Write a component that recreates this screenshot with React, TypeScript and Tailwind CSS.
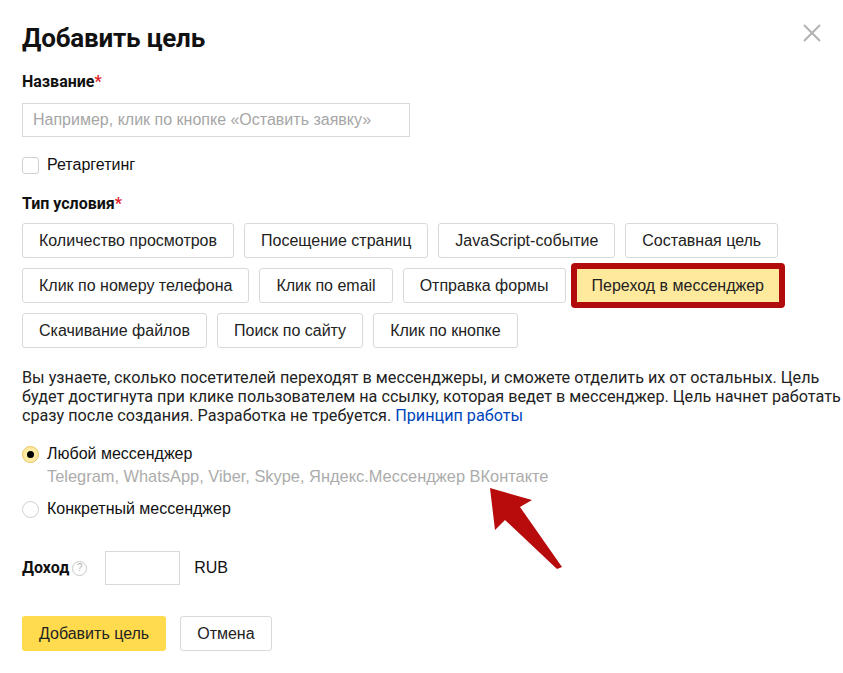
import { useState } from 'react'

const row1 = ['Количество просмотров', 'Посещение страниц', 'JavaScript-событие', 'Составная цель']
const row2 = ['Клик по номеру телефона', 'Клик по email', 'Отправка формы']
const row3 = ['Скачивание файлов', 'Поиск по сайту', 'Клик по кнопке']

const arial = { fontFamily: '"Liberation Sans", Arial, sans-serif' }

const TypeButton = ({ label }: { label: string }) => (
  <button className="h-[35px] rounded-[3px] border border-[#d9d9d9] bg-white px-4 text-[16px] text-[#222]">
    {label}
  </button>
)

const Radio = ({ checked }: { checked: boolean }) => (
  <span
    className={
      checked
        ? 'flex h-[17px] w-[17px] items-center justify-center rounded-full border border-[#e8c55a] bg-[#ffeaa3]'
        : 'h-[17px] w-[17px] rounded-full border border-[#d0d0d0]'
    }
  >
    {checked && <span className="h-[7px] w-[7px] rounded-full bg-black" />}
  </span>
)

export default function App() {
  const [any, setAny] = useState(true)

  return (
    <div
      className="relative min-h-[673px] w-[843px] bg-white px-[22px] pt-[22px] text-[#111]"
      style={{ fontFamily: 'Roboto, "Noto Sans", sans-serif' }}
    >
      {/* close */}
      <button className="absolute right-[22px] top-[24px] text-[#b3b3b3]">
        <svg width="18" height="18" viewBox="0 0 18 18" fill="none" stroke="currentColor" strokeWidth="2">
          <path d="M1 1l16 16M17 1L1 17" />
        </svg>
      </button>

      <h1 className="text-[26px] font-bold leading-[32px] tracking-[-0.2px]">Добавить цель</h1>

      <div className="mt-[18px] text-[16px] font-bold leading-[20px]">
        Название<span className="text-[#e0222b]">*</span>
      </div>

      <input
        className="mt-[11px] block h-[34px] w-[388px] border border-[#d9d9d9] px-[10px] text-[16px] placeholder:text-[#a6a6a6] focus:outline-none"
        style={arial}
        placeholder="Например, клик по кнопке «Оставить заявку»"
      />

      <label className="mt-[16px] flex items-center gap-2 text-[16px]" style={arial}>
        <span className="h-[17px] w-[17px] rounded-[3px] border border-[#cfcfcf] bg-white" />
        <span>Ретаргетинг</span>
      </label>

      <div className="mt-[17px] text-[16px] font-bold leading-[20px]">
        Тип условия<span className="text-[#e0222b]">*</span>
      </div>

      <div className="mt-[9px] flex flex-col gap-[10px]" style={arial}>
        <div className="flex gap-[10px]">
          {row1.map(l => (
            <TypeButton key={l} label={l} />
          ))}
        </div>
        <div className="flex items-center gap-[5px]">
          <div className="flex gap-[10px]">
            {row2.map(l => (
              <TypeButton key={l} label={l} />
            ))}
          </div>
          <div className="-my-[6px] rounded-[4px] bg-[#b20b0b] p-[6px]">
            <button className="h-[33px] bg-[#ffe99d] px-[15px] text-[16px] text-[#222]">Переход в мессенджер</button>
          </div>
        </div>
        <div className="flex gap-[10px]">
          {row3.map(l => (
            <TypeButton key={l} label={l} />
          ))}
        </div>
      </div>

      <p className="mt-[20px] whitespace-nowrap text-[16.2px] leading-[19px] text-[#222]">
        Вы узнаете, сколько посетителей переходят в мессенджеры, и сможете отделить их от остальных. Цель
        <br />
        будет достигнута при клике пользователем на ссылку, которая ведет в мессенджер. Цель начнет работать
        <br />
        сразу после создания. Разработка не требуется. <a className="text-[#04b]">Принцип работы</a>
      </p>

      <div className="mt-[17px] flex flex-col" style={arial}>
        <label className="flex items-center gap-2 text-[16px]" onClick={() => setAny(true)}>
          <Radio checked={any} />
          <span>Любой мессенджер</span>
        </label>
        <div className="ml-[25px] text-[16.4px] leading-[20px] text-[#acacac]">
          Telegram, WhatsApp, Viber, Skype, Яндекс.Мессенджер ВКонтакте
        </div>
        <label className="mt-[11px] flex items-center gap-2 text-[16px]" onClick={() => setAny(false)}>
          <Radio checked={!any} />
          <span>Конкретный мессенджер</span>
        </label>
      </div>

      <div className="mt-[30px] flex items-center">
        <span className="text-[16px] font-bold">Доход</span>
        <span
          className="ml-[3px] flex h-[15px] w-[15px] items-center justify-center rounded-full border border-[#c8c8c8] text-[10px] leading-none text-[#b0b0b0]"
          style={arial}
        >
          ?
        </span>
        <input className="ml-[18px] h-[34px] w-[75px] border border-[#d9d9d9] focus:outline-none" />
        <span className="ml-[14px] text-[16px]" style={arial}>
          RUB
        </span>
      </div>

      <div className="mt-[31px] flex gap-[14px]" style={arial}>
        <button className="h-[35px] rounded-[3px] bg-[#ffdb4d] px-[17px] text-[16px] text-[#222]">Добавить цель</button>
        <button className="h-[35px] rounded-[3px] border border-[#d9d9d9] bg-white px-4 text-[16px] text-[#222]">
          Отмена
        </button>
      </div>

      {/* annotation arrow */}
      <svg className="absolute left-[480px] top-[480px]" width="100" height="100" viewBox="0 0 100 100">
        <path d="M10 8 L52 20 L40 27 L82 87 L77 89 L25 40 L15 50 Z" fill="#b80b0b" strokeLinejoin="round" />
      </svg>
    </div>
  )
}
